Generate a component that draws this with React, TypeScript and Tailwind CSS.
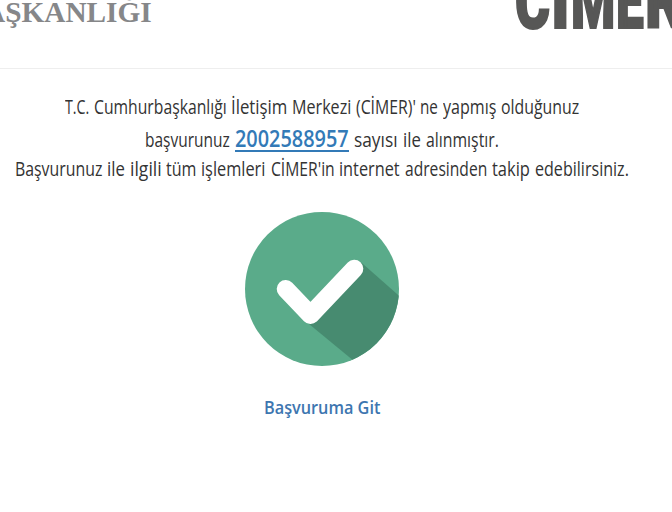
import { useLayoutEffect, useRef, useState } from "react";

type FitProps = { text: string; width: number; className?: string };

// Condenses one run of text horizontally to the given width.
function Fit({ text, width, className = "" }: FitProps) {
  const ref = useRef<HTMLSpanElement>(null);
  const [scale, setScale] = useState(1);
  useLayoutEffect(() => {
    if (ref.current) setScale(width / ref.current.offsetWidth);
  }, [text, width]);
  return (
    <span className={`block shrink-0 whitespace-nowrap ${className}`} style={{ width }}>
      <span ref={ref} className="inline-block origin-left" style={{ transform: `scaleX(${scale})` }}>
        {text}
      </span>
    </span>
  );
}

type Word = [text: string, width: number];

const introWords: Word[] = [
  ["T.C.", 24],
  ["Cumhurbaşkanlığı", 133],
  ["İletişim", 56],
  ["Merkezi", 59.5],
  ["(CİMER)'", 60],
  ["ne", 18],
  ["yapmış", 53.5],
  ["olduğunuz", 78],
];
const receivedWords: Word[] = [
  ["sayısı", 43.5],
  ["ile", 18],
  ["alınmıştır.", 73],
];
const trackingWords: Word[] = [
  ["Başvurunuz", 87],
  ["ile", 18],
  ["ilgili", 31.5],
  ["tüm", 30.5],
  ["işlemleri", 64.5],
  ["CİMER'in", 63.5],
  ["internet", 61],
  ["adresinden", 82.5],
  ["takip", 38],
  ["edebilirsiniz.", 94],
];
const logoLetters: Word[] = [
  ["C", 35],
  ["İ", 19],
  ["M", 44],
  ["E", 28],
  ["R", 39],
];

function Words({ words }: { words: Word[] }) {
  return (
    <>
      {words.map(([text, width]) => (
        <Fit key={text} text={text} width={width} />
      ))}
    </>
  );
}

function CheckBadge() {
  return (
    <svg className="block h-[154px] w-[154px]" viewBox="0 0 154 154" aria-hidden="true">
      <defs>
        <clipPath id="disc">
          <circle cx="77" cy="77" r="77" />
        </clipPath>
      </defs>
      <circle cx="77" cy="77" r="77" fill="#5aab8a" />
      <path d="M116 50.5 L118 52 L160 89 L160 154 L115 154 L64 112 Z" fill="#478b70" clipPath="url(#disc)" />
      <path
        d="M40.7 77 L65.5 103 L109.3 56.7"
        fill="none"
        stroke="#fff"
        strokeWidth="18"
        strokeLinecap="round"
        strokeLinejoin="round"
      />
    </svg>
  );
}

export default function App() {
  return (
    <div className="h-[512px] w-[672px] overflow-hidden bg-white font-['Open_Sans','Noto_Sans',sans-serif] text-[#333]">
      <header className="flex h-[69px] justify-between overflow-hidden border-b border-[#eee]">
        <Fit
          text="AŞKANLIĞI"
          width={168}
          className="-ml-4 -mt-[5px] font-['Liberation_Serif',serif] text-[30px] leading-[34px] font-bold text-[#868789]"
        />
        <div className="-mr-[12px] -mt-[38px] flex h-20 gap-[1px] font-['Roboto',sans-serif] text-[78px] leading-[80px] font-black text-[#575756] [-webkit-text-stroke:2px_#575756]">
          <Words words={logoLetters} />
        </div>
      </header>
      <main className="flex w-[644px] flex-col items-center text-[19.5px]">
        <div className="mt-[24px] flex h-7 items-center gap-[4.5px] leading-7">
          <Words words={introWords} />
        </div>
        <div className="mt-[3px] flex h-8 items-baseline gap-[5px] leading-8">
          <Fit text="başvurunuz" width={85} />
          <a href="#" className="border-b-2 border-[#337ab7] text-[22.5px] leading-[23px] font-semibold text-[#337ab7]">
            <Fit text="2002588957" width={114} />
          </a>
          <Words words={receivedWords} />
        </div>
        <div className="-mt-px flex h-7 items-center gap-[4.8px] leading-7">
          <Words words={trackingWords} />
        </div>
        <div className="mt-[29px]">
          <CheckBadge />
        </div>
        <a href="#" className="mt-[27px] text-[18.5px] leading-7 font-semibold text-[#3d76b0]">
          <Fit text="Başvuruma Git" width={116} />
        </a>
      </main>
    </div>
  );
}
